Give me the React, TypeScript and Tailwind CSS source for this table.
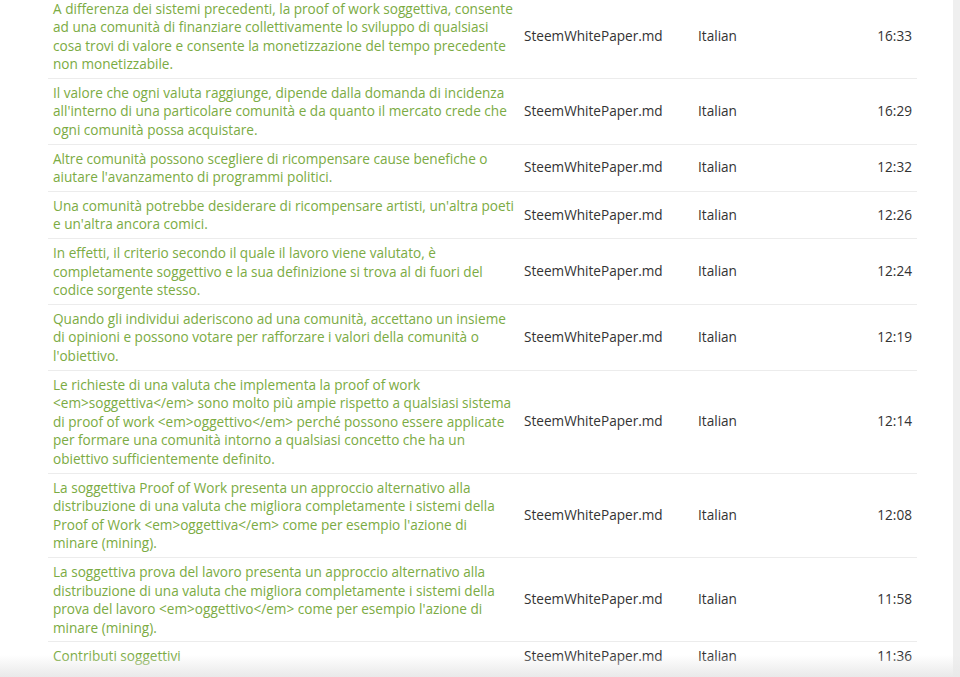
const rows = [
  {
    text: "A differenza dei sistemi precedenti, la proof of work soggettiva, consente ad una comunità di finanziare collettivamente lo sviluppo di qualsiasi cosa trovi di valore e consente la monetizzazione del tempo precedente non monetizzabile.",
    time: "16:33",
  },
  {
    text: "Il valore che ogni valuta raggiunge, dipende dalla domanda di incidenza all'interno di una particolare comunità e da quanto il mercato crede che ogni comunità possa acquistare.",
    time: "16:29",
  },
  {
    text: "Altre comunità possono scegliere di ricompensare cause benefiche o aiutare l'avanzamento di programmi politici.",
    time: "12:32",
  },
  {
    text: "Una comunità potrebbe desiderare di ricompensare artisti, un'altra poeti e un'altra ancora comici.",
    time: "12:26",
  },
  {
    text: "In effetti, il criterio secondo il quale il lavoro viene valutato, è completamente soggettivo e la sua definizione si trova al di fuori del codice sorgente stesso.",
    time: "12:24",
  },
  {
    text: "Quando gli individui aderiscono ad una comunità, accettano un insieme di opinioni e possono votare per rafforzare i valori della comunità o l'obiettivo.",
    time: "12:19",
  },
  {
    text: "Le richieste di una valuta che implementa la proof of work <em>soggettiva</em> sono molto più ampie rispetto a qualsiasi sistema di proof of work <em>oggettivo</em> perché possono essere applicate per formare una comunità intorno a qualsiasi concetto che ha un obiettivo sufficientemente definito.",
    time: "12:14",
  },
  {
    text: "La soggettiva Proof of Work presenta un approccio alternativo alla distribuzione di una valuta che migliora completamente i sistemi della Proof of Work <em>oggettiva</em> come per esempio l'azione di minare (mining).",
    time: "12:08",
  },
  {
    text: "La soggettiva prova del lavoro presenta un approccio alternativo alla distribuzione di una valuta che migliora completamente i sistemi della prova del lavoro <em>oggettivo</em> come per esempio l'azione di minare (mining).",
    time: "11:58",
  },
  {
    text: "Contributi soggettivi",
    time: "11:36",
  },
]

export default function App() {
  return (
    <div
      className="relative h-[677px] w-[960px] overflow-hidden bg-white flex"
      style={{ fontFamily: '"Open Sans", "Noto Sans", sans-serif' }}
    >
      <div className="flex-1 pl-[48px] pr-[36px]">
        <table className="-mt-[5.5px] w-full table-fixed border-collapse text-[13.6px] leading-[18.6px]">
          <colgroup>
            <col className="w-[471px]" />
            <col className="w-[174px]" />
            <col className="w-[140px]" />
            <col />
          </colgroup>
          <tbody>
            {rows.map((row, i) => (
              <tr key={i} className="border-b border-[#ececec] last:border-b-0">
                <td className="pl-[5px] pr-[4px] pt-[5px] pb-[4px] align-middle text-[#7bab43]">
                  {row.text}
                </td>
                <td className="px-[5px] align-middle text-[#333]">SteemWhitePaper.md</td>
                <td className="px-[5px] align-middle text-[#333]">Italian</td>
                <td className="pr-[5px] text-right align-middle text-[#333]">{row.time}</td>
              </tr>
            ))}
          </tbody>
        </table>
      </div>
      <div className="w-[7px] bg-[#efefef]" />

      {/* bottom shade */}
      <div className="pointer-events-none absolute bottom-0 left-0 right-0 h-[22px] bg-gradient-to-b from-transparent to-[#e9e9e9]" />
    </div>
  )
}
